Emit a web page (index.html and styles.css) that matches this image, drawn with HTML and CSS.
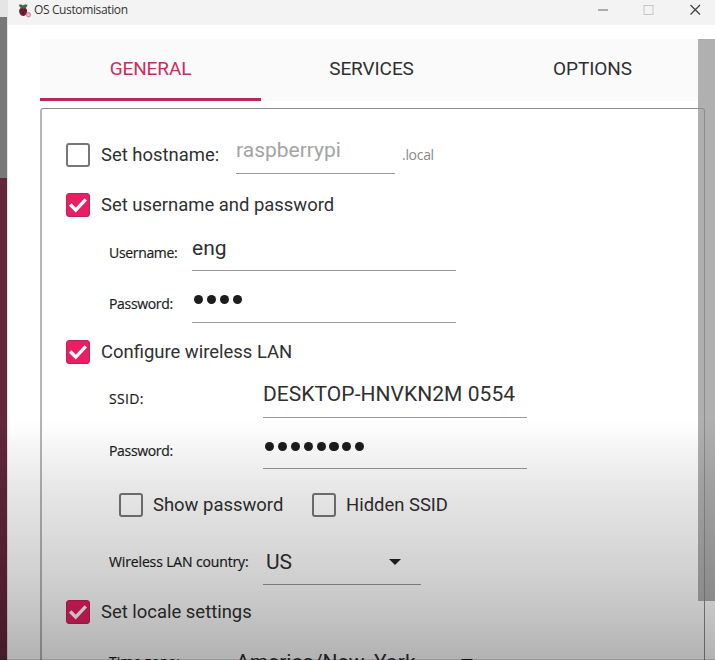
FILE: index.html
```html
<!DOCTYPE html>
<html lang="en">
<head>
<meta charset="utf-8">
<title>OS Customisation</title>
<link rel="stylesheet" href="styles.css">
</head>
<body>
<aside class="behind"><div class="behind-title"></div><div class="behind-grey"></div><div class="behind-red"></div></aside>
<main class="window">
  <header class="titlebar">
    <svg class="logo" width="14" height="14" viewBox="0 0 14 14">
      <path d="M5.200 3.500C8 3 9.500 5.500 9 8C8.500 10.500 7 12 5.200 12S1.700 10.500 1.200 8C.7 5.500 2.500 3 5.200 3.500Z" fill="#7c1d3d"/>
      <path d="M.8 .8Q4 0 5 1.500Q6 0 9.500 .8Q9 4.500 5.200 4.500Q1.500 4.500 .8 .8Z" fill="#3c6b45"/>
      <circle cx="3.700" cy="6.500" r="1" fill="#4d1729"/><circle cx="6.700" cy="6.500" r="1" fill="#4d1729"/><circle cx="5.200" cy="9" r="1.100" fill="#4d1729"/>
      <rect x="8.800" y="8.800" width="3.400" height="4" rx="1" fill="#f3c9d4" stroke="#cf6c86"/>
    </svg>
    <span class="title">OS Customisation</span>
    <svg class="controls" width="120" height="20" viewBox="0 0 120 20" fill="none">
      <path d="M3 10H13" stroke="#666"/>
      <rect x="49" y="5.500" width="9" height="9" stroke="#c6c6c6"/>
      <path d="M95.500 5L105 14.500M105 5L95.500 14.500" stroke="#444" stroke-width="1.300"/>
    </svg>
  </header>
  <section class="content">
    <nav class="tabs">
      <div class="tab active"><span>GENERAL</span></div>
      <div class="tab"><span>SERVICES</span></div>
      <div class="tab"><span>OPTIONS</span></div>
    </nav>
    <div class="scrollbar"></div>
    <div class="panel">
      <div class="row h50">
        <i class="box"></i><span class="check-label w-host">Set hostname:</span>
        <div class="field hostname"><span>raspberrypi</span></div><span class="suffix">.local</span>
      </div>
      <div class="row h50">
        <i class="box on"><svg viewBox="0 0 24 24"><path d="M3.500 11.500L9.500 17.500L20.500 5.800"/></svg></i><span class="check-label">Set username and password</span>
      </div>
      <div class="row h46 sub">
        <span class="label narrow">Username:</span><div class="field user"><span>eng</span></div>
      </div>
      <div class="row h56 sub">
        <span class="label narrow">Password:</span><div class="field secret"><div class="dots"><b></b><b></b><b></b><b></b></div></div>
      </div>
      <div class="row h40">
        <i class="box on"><svg viewBox="0 0 24 24"><path d="M3.500 11.500L9.500 17.500L20.500 5.800"/></svg></i><span class="check-label">Configure wireless LAN</span>
      </div>
      <div class="row h54 sub">
        <span class="label wide ssid-label">SSID:</span><div class="field ssid"><span>DESKTOP-HNVKN2M 0554</span></div>
      </div>
      <div class="row h50 sub">
        <span class="label wide">Password:</span><div class="field key"><div class="dots"><b></b><b></b><b></b><b></b><b></b><b></b><b></b><b></b></div></div>
      </div>
      <div class="row h58 options">
        <i class="box"></i><span class="check-label show">Show password</span>
        <i class="box"></i><span class="check-label">Hidden SSID</span>
      </div>
      <div class="row h54 sub">
        <span class="label wide country-label">Wireless LAN country:</span>
        <div class="field country"><span>US</span><i class="arrow"></i></div>
      </div>
      <div class="row h46 locale">
        <i class="box on"><svg viewBox="0 0 24 24"><path d="M3.500 11.500L9.500 17.500L20.500 5.800"/></svg></i><span class="check-label">Set locale settings</span>
      </div>
      <div class="row h54 sub">
        <span class="label zone-label">Time zone:</span>
        <div class="field zone"><span>America/New_York</span><i class="arrow"></i></div>
      </div>
    </div>
  </section>
</main>
<div class="shade"></div>
</body>
</html>
```

FILE: styles.css
```css
* { box-sizing: border-box; }
body {
  position: relative;
  display: flex;
  width: 715px;
  height: 660px;
  margin: 0;
  overflow: hidden;
  background: #fff;
  color: #303030;
  font-family: Roboto, "Liberation Sans", sans-serif;
}
.behind { display: flex; flex-direction: column; width: 7px; flex: none; }
.behind-title { height: 17px; background: #e5e5e5; }
.behind-grey { height: 161px; background: #787878; }
.behind-red { flex: 1; background: #64263b; }
.window { width: 708px; height: 660px; display: flex; flex-direction: column; border-left: 1px solid #e4e4e4; overflow: hidden; }
.titlebar { height: 25px; flex: none; display: flex; align-items: flex-start; background: #f3f3f3; padding: 0 5px 0 10px; }
.logo { margin: 4px 2px 0 0; flex: none; }
.title { flex: 1; font: 12px/20px "Open Sans", "Noto Sans", sans-serif; color: #333; letter-spacing: -0.37px; white-space: nowrap; }
.controls { flex: none; width: 120px; margin-right: -5px; }
.content { position: relative; padding: 14px 0 0 32px; flex: 1; min-height: 0; overflow: hidden; }
.tabs { display: grid; grid-template-columns: repeat(3, 221px); width: 664px; height: 62px; background: #fafafa; }
.tab { display: flex; justify-content: center; align-items: center; border-bottom: 3px solid transparent; font-size: 19px; letter-spacing: -0.1px; }
.tab.active { color: #c92e5e; border-color: #bd2557; }
.panel { position: relative; width: 665px; height: 590px; margin-top: 7px; padding: 21px 0 0 24px; border: 1px solid #8c8c8c; border-left: 2px solid #b5b5b5; border-radius: 3px; }
.scrollbar { position: absolute; right: 0; top: 14px; width: 17px; height: 562px; background: #b0b0b0; }
.row { display: flex; align-items: center; }
.h40 { height: 40px; }
.h46 { height: 46px; }
.h50 { height: 50px; }
.h54 { height: 54px; }
.h56 { height: 56px; }
.h58 { height: 58px; }
.sub { padding-left: 43px; }
.options { padding-left: 53px; }
.locale { padding-top: 1px; }
.box { width: 24px; height: 24px; flex: none; border: 2.5px solid #777; border-radius: 3px; margin-right: 11px; }
.options .box { margin-right: 10px; }
.box.on { border: 1px solid #b82654; background: #e91e63; }
.box svg { display: block; width: 22px; height: 22px; fill: none; stroke: #fff; stroke-width: 3.6; }
.check-label { font-size: 18.45px; white-space: nowrap; }
.w-host { width: 135px; }
.show { width: 159px; }
.label { font: 14px "Open Sans", "Noto Sans", sans-serif; color: #1c1c1c; -webkit-text-stroke: 0.2px; white-space: nowrap; letter-spacing: -0.33px; padding-bottom: 2px; }
.country-label { letter-spacing: -0.14px; padding-bottom: 0; }
.ssid-label { letter-spacing: 0.35px; }
.narrow { width: 83px; }
.wide { width: 154px; }
.field { display: flex; align-items: center; align-self: flex-end; height: 46px; border-bottom: 1px solid #999; font-size: 21px; white-space: nowrap; }
.hostname { width: 159px; height: 48px; margin-bottom: 6px; color: #a4a4a4; }
.user { width: 264px; margin-bottom: 5px; }
.secret { width: 264px; margin-bottom: 9px; }
.ssid { width: 264px; height: 48px; margin-bottom: 8px; letter-spacing: 0.05px; }
.key { width: 264px; height: 44px; margin-bottom: 7px; }
.country { width: 158px; margin-bottom: 3px; padding-left: 3px; justify-content: space-between; }
.zone { width: 257px; margin-bottom: 3px; justify-content: space-between; }
.suffix { margin-left: 7px; padding-bottom: 1px; font: 14px "Open Sans", "Noto Sans", sans-serif; color: #888; letter-spacing: -0.3px; }
.dots { display: flex; gap: 3.7px; padding-left: 2px; }
.dots b { width: 9.2px; height: 9.2px; border-radius: 50%; background: #1d1d1d; }
.arrow { border: 6.500px solid transparent; border-top-color: #222; border-bottom: 0; margin-right: 20px; }
.zone-label { width: 127px; padding-bottom: 0; letter-spacing: 0; }
.shade { position: absolute; inset: 0; border-bottom: 1px solid #0006; background: linear-gradient(transparent 420px, #00000017 485px, #00000033 590px, #0000004d 660px); pointer-events: none; }
```
